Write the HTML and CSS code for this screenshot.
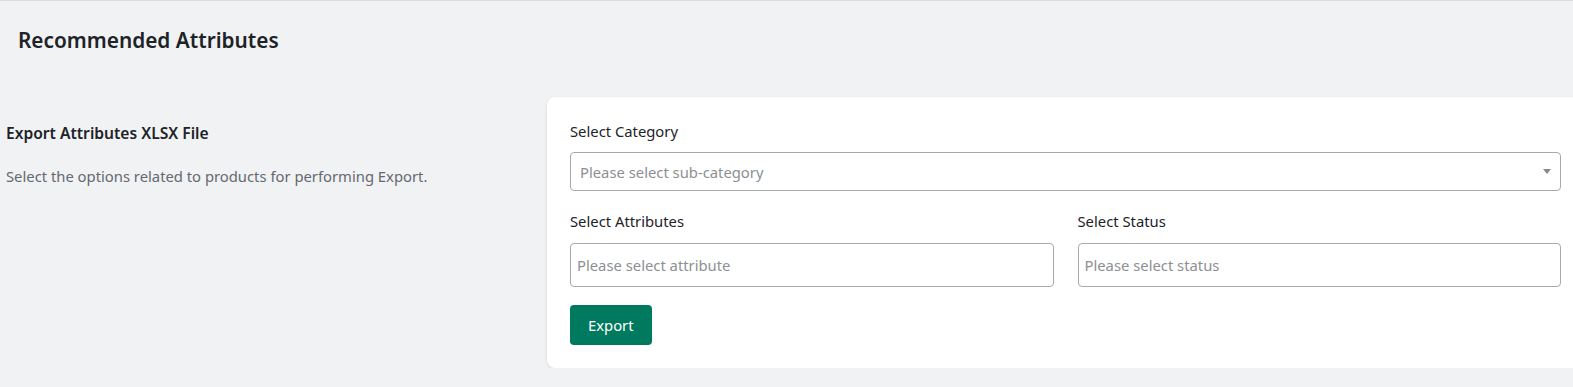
FILE: index.html
```html
<!DOCTYPE html>
<html lang="en">
<head>
    <meta charset="UTF-8">
    <meta name="viewport" content="width=device-width, initial-scale=1.0">
    <title>Recommended Attributes</title>
    <link rel="stylesheet" href="styles.css">
</head>
<body>
    <header class="page-header">
        <h1>Recommended Attributes</h1>
    </header>

    <section class="layout">
        <div class="intro">
            <h2>Export Attributes XLSX File</h2>
            <p>Select the options related to products for performing Export.</p>
        </div>

        <div class="card">
            <form class="export-form">
                <div class="field">
                    <label>Select Category</label>
                    <div class="select-box">
                        <span class="placeholder">Please select sub-category</span>
                        <span class="caret"></span>
                    </div>
                </div>

                <div class="row">
                    <div class="field">
                        <label for="attr">Select Attributes</label>
                        <input type="text" id="attr" placeholder="Please select attribute">
                    </div>
                    <div class="field">
                        <label for="status">Select Status</label>
                        <input type="text" id="status" placeholder="Please select status">
                    </div>
                </div>

                <div>
                    <button type="button" class="btn-export">Export</button>
                </div>
            </form>
        </div>
    </section>
</body>
</html>
```

FILE: styles.css
```css
:root {
    --bg: #f1f2f4;
    --text: #1d2327;
    --muted: #646970;
    --border: #a7aaad;
    --placeholder: #8c8f94;
    --green: #007a5e;
}

body, html {
    margin: 0;
    padding: 0;
}

body {
    background-color: var(--bg);
    border-top: 1px solid #dcdcde;
    color: var(--text);
    font-family: "Noto Sans", sans-serif;
    overflow: hidden;
}

.page-header {
    padding: 25px 18px 0;
}

.page-header h1 {
    margin: 0;
    font-size: 20.8px;
    font-weight: 600;
    line-height: 28px;
}

.layout {
    display: grid;
    grid-template-columns: 547px 1fr;
    width: calc(100% + 11px);
    margin-top: 43px;
}

.intro {
    padding: 24px 6px 0;
}

.intro h2 {
    margin: 0;
    font-size: 15.6px;
    font-weight: 600;
    line-height: 24px;
}

.intro p {
    margin: 21px 0 0;
    font-size: 14.8px;
    line-height: 20px;
    color: var(--muted);
}

.card {
    background: #fff;
    border-radius: 8px;
    box-shadow: 0 1px 3px rgba(0, 0, 0, 0.12);
    padding: 24px 23px 23px 23px;
}

.export-form {
    display: flex;
    flex-direction: column;
    gap: 20px;
}

.field {
    display: flex;
    flex-direction: column;
    gap: 11px;
}

.row .field {
    gap: 12px;
}

.field label {
    font-size: 14.8px;
    line-height: 20px;
}

.row {
    display: grid;
    grid-template-columns: 1fr 1fr;
    gap: 24px;
}

.select-box {
    display: flex;
    align-items: center;
    justify-content: space-between;
    height: 39px;
    box-sizing: border-box;
    padding: 0 10px 0 9px;
    border: 1px solid var(--border);
    border-radius: 4px;
    font-size: 14.8px;
}

.placeholder {
    color: var(--placeholder);
}

.caret {
    width: 0;
    height: 0;
    border-left: 4px solid transparent;
    border-right: 4px solid transparent;
    border-top: 5px solid #888;
    margin-right: -1px;
}

input {
    height: 44px;
    box-sizing: border-box;
    padding: 0 6px;
    border: 1px solid var(--border);
    border-radius: 4px;
    font-family: inherit;
    font-size: 14.8px;
    color: var(--text);
}

input::placeholder {
    color: var(--placeholder);
}

.btn-export {
    height: 40px;
    padding: 0 18px;
    margin-top: -2px;
    border: none;
    border-radius: 4px;
    background-color: var(--green);
    color: #fff;
    font-family: inherit;
    font-size: 14.8px;
    cursor: pointer;
}
```
